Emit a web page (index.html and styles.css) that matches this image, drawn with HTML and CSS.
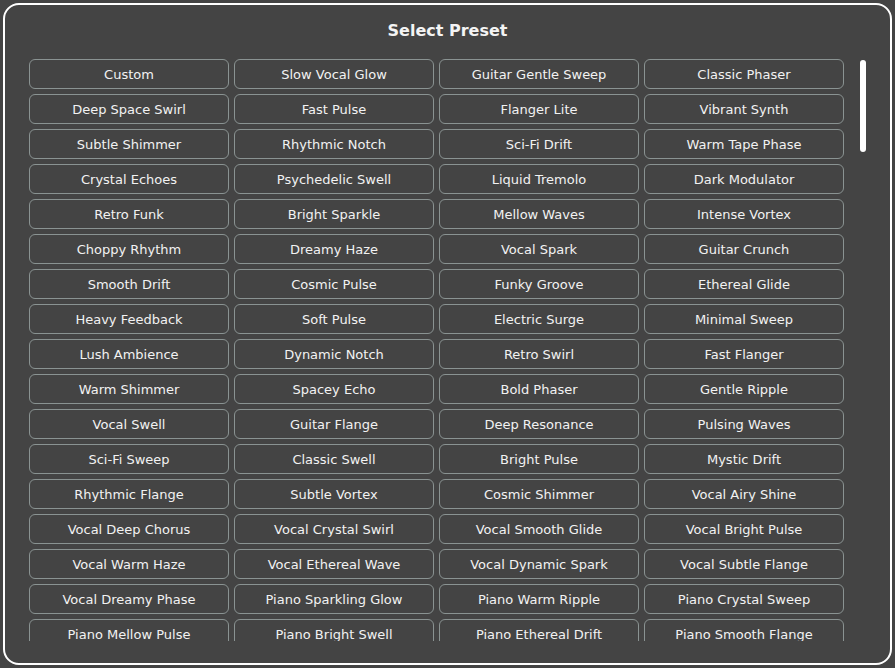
FILE: index.html
```html
<!DOCTYPE html>
<html>
<head>
<meta charset="utf-8">
<link rel="stylesheet" href="styles.css">
</head>
<body>
<div class="panel">
  <h1 class="title">Select Preset</h1>
  <div class="list">
    <div class="grid">
      <button class="preset">Custom</button>
      <button class="preset">Slow Vocal Glow</button>
      <button class="preset">Guitar Gentle Sweep</button>
      <button class="preset">Classic Phaser</button>
      <button class="preset">Deep Space Swirl</button>
      <button class="preset">Fast Pulse</button>
      <button class="preset">Flanger Lite</button>
      <button class="preset">Vibrant Synth</button>
      <button class="preset">Subtle Shimmer</button>
      <button class="preset">Rhythmic Notch</button>
      <button class="preset">Sci-Fi Drift</button>
      <button class="preset">Warm Tape Phase</button>
      <button class="preset">Crystal Echoes</button>
      <button class="preset">Psychedelic Swell</button>
      <button class="preset">Liquid Tremolo</button>
      <button class="preset">Dark Modulator</button>
      <button class="preset">Retro Funk</button>
      <button class="preset">Bright Sparkle</button>
      <button class="preset">Mellow Waves</button>
      <button class="preset">Intense Vortex</button>
      <button class="preset">Choppy Rhythm</button>
      <button class="preset">Dreamy Haze</button>
      <button class="preset">Vocal Spark</button>
      <button class="preset">Guitar Crunch</button>
      <button class="preset">Smooth Drift</button>
      <button class="preset">Cosmic Pulse</button>
      <button class="preset">Funky Groove</button>
      <button class="preset">Ethereal Glide</button>
      <button class="preset">Heavy Feedback</button>
      <button class="preset">Soft Pulse</button>
      <button class="preset">Electric Surge</button>
      <button class="preset">Minimal Sweep</button>
      <button class="preset">Lush Ambience</button>
      <button class="preset">Dynamic Notch</button>
      <button class="preset">Retro Swirl</button>
      <button class="preset">Fast Flanger</button>
      <button class="preset">Warm Shimmer</button>
      <button class="preset">Spacey Echo</button>
      <button class="preset">Bold Phaser</button>
      <button class="preset">Gentle Ripple</button>
      <button class="preset">Vocal Swell</button>
      <button class="preset">Guitar Flange</button>
      <button class="preset">Deep Resonance</button>
      <button class="preset">Pulsing Waves</button>
      <button class="preset">Sci-Fi Sweep</button>
      <button class="preset">Classic Swell</button>
      <button class="preset">Bright Pulse</button>
      <button class="preset">Mystic Drift</button>
      <button class="preset">Rhythmic Flange</button>
      <button class="preset">Subtle Vortex</button>
      <button class="preset">Cosmic Shimmer</button>
      <button class="preset">Vocal Airy Shine</button>
      <button class="preset">Vocal Deep Chorus</button>
      <button class="preset">Vocal Crystal Swirl</button>
      <button class="preset">Vocal Smooth Glide</button>
      <button class="preset">Vocal Bright Pulse</button>
      <button class="preset">Vocal Warm Haze</button>
      <button class="preset">Vocal Ethereal Wave</button>
      <button class="preset">Vocal Dynamic Spark</button>
      <button class="preset">Vocal Subtle Flange</button>
      <button class="preset">Vocal Dreamy Phase</button>
      <button class="preset">Piano Sparkling Glow</button>
      <button class="preset">Piano Warm Ripple</button>
      <button class="preset">Piano Crystal Sweep</button>
      <button class="preset">Piano Mellow Pulse</button>
      <button class="preset">Piano Bright Swell</button>
      <button class="preset">Piano Ethereal Drift</button>
      <button class="preset">Piano Smooth Flange</button>
    </div>
  </div>
  <div class="thumb"></div>
</div>
</body>
</html>
```
FILE: styles.css
```css
html, body {
  margin: 0;
  padding: 0;
  background: #444444;
  width: 895px;
  height: 668px;
  overflow: hidden;
}
body {
  padding: 3px;
  box-sizing: border-box;
  font-family: "DejaVu Sans", Verdana, sans-serif;
}
.panel {
  position: relative;
  box-sizing: border-box;
  width: 889px;
  height: 662px;
  border: 2px solid #ffffff;
  border-radius: 16px;
  background: #444444;
  padding: 0 24px 0 24px;
  display: flex;
  flex-direction: column;
}
.title {
  margin: 0;
  padding: 15px 0 0 0;
  height: 39px;
  box-sizing: border-box;
  text-align: center;
  color: #f4f4f4;
  font-size: 16px;
  font-weight: bold;
  line-height: 22px;
}
.list {
  margin-top: 15px;
  height: 582px;
  width: 837px;
  overflow: hidden;
}
.grid {
  display: grid;
  grid-template-columns: repeat(4, 200px);
  grid-auto-rows: 30px;
  gap: 5px;
  align-content: start;
}
.preset {
  margin: 0;
  padding: 0;
  background: #444444;
  color: #f2f2f2;
  border: 1px solid #8a9392;
  border-radius: 6px;
  font-family: "DejaVu Sans", Verdana, sans-serif;
  font-size: 13px;
  text-align: center;
}
.thumb {
  position: absolute;
  left: 855px;
  top: 55px;
  width: 6px;
  height: 92px;
  border-radius: 3px;
  background: #ffffff;
}
```
